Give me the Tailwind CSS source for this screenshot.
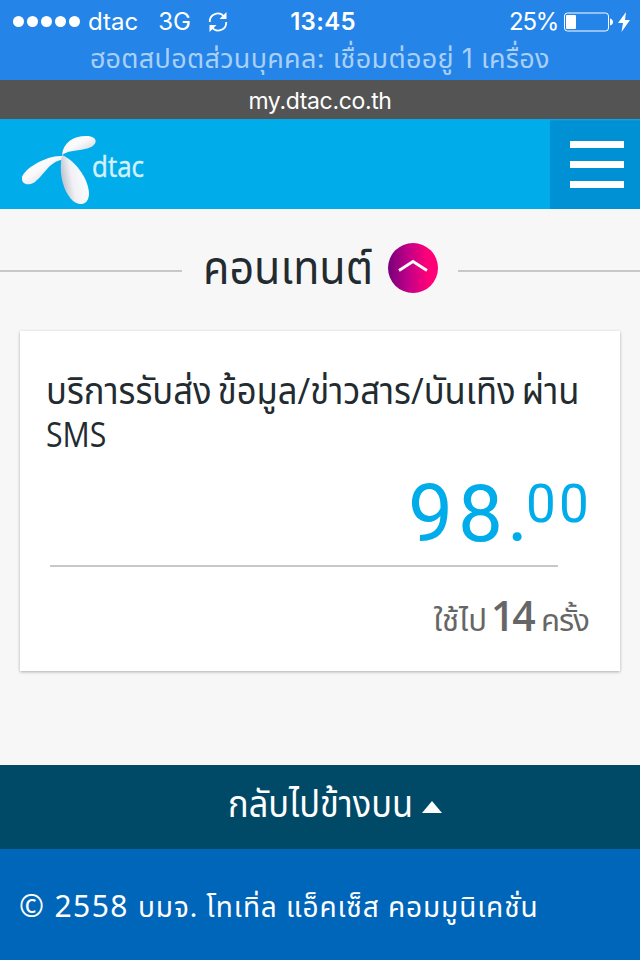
<!DOCTYPE html>
<html lang="th">
<head>
<meta charset="utf-8">
<meta name="viewport" content="width=device-width">
<title>dtac</title>
<script src="https://cdn.jsdelivr.net/npm/@tailwindcss/browser@4"></script>
</head>
<body class="w-[640px] h-[960px] overflow-hidden bg-[#f7f7f7] flex flex-col font-['Inter','Noto_Sans_Thai','Noto_Sans',sans-serif]">
<header class="h-20 shrink-0 bg-[#2484e8] text-white">
  <div class="h-10 grid grid-cols-[1fr_auto_1fr] items-center pl-[13px] pr-[10px] text-[24px] leading-[42px] whitespace-nowrap">
    <div class="flex items-center">
      <div class="flex gap-[3px]"><i class="size-[11px] rounded-full bg-white"></i><i class="size-[11px] rounded-full bg-white"></i><i class="size-[11px] rounded-full bg-white"></i><i class="size-[11px] rounded-full bg-white"></i><i class="size-[11px] rounded-full bg-white"></i></div>
      <span class="ml-2 pt-px">dtac</span><span class="ml-[20px] pt-px">3G</span>
      <svg class="ml-[17px] w-[20px] h-[20px]" viewBox="0 0 20 20" fill="none" stroke="white" stroke-width="1.8"><path d="M1.800 10A8 8 0 0 1 16 4.500M18.200 10A8 8 0 0 1 4 15.500"/><path d="M18.500 0V7H11.500Z M1.500 20V13H8.500Z" fill="white" stroke="none"/></svg>
    </div>
    <span class="font-semibold pl-[3px] pt-px tracking-[.3px]">13:45</span>
    <div class="flex items-center justify-end">
      <span class="tracking-[-1.300px] pt-px">25%</span>
      <svg class="ml-[6px] w-[49px] h-[20px]" viewBox="0 0 49 20"><rect x=".5" y="1" width="44" height="18" rx="3" fill="none" stroke="white"/><rect x="2" y="3" width="10" height="14" rx="1" fill="white"/><path d="M46 6.500Q49 7.500 49 10T46 13.500Z" fill="white"/></svg>
      <svg class="ml-[5px] w-[12px] h-[20px]" viewBox="0 0 12 20"><path d="M8 0L0 11H5L3.500 20L12 8H7Z" fill="white"/></svg>
    </div>
  </div>
  <div class="h-10 flex justify-center text-[27px] tracking-[.3px] leading-[38px] text-[#a9d0f7] whitespace-nowrap"><span>ฮอตสปอตส่วนบุคคล: เชื่อมต่ออยู่ 1 เครื่อง</span></div>
</header>
<div class="h-[39px] shrink-0 bg-[#545454] text-white text-center text-[23px] tracking-[-.35px] leading-[42px]"><span>my.dtac.co.th</span></div>
<nav class="h-[90px] shrink-0 bg-[#00acea] flex justify-between">
  <div class="flex items-center pl-5">
    <svg class="w-[140px] h-[80px]" viewBox="20 124 140 80">
      <defs>
        <linearGradient id="a" x1="0" y1="0" x2="1" y2="1"><stop offset=".45" stop-color="#fafafc"/><stop offset="1" stop-color="#c6cbd4"/></linearGradient>
        <linearGradient id="b" x1="0" y1=".6" x2="1" y2=".3"><stop offset="0" stop-color="#b4bac5"/><stop offset=".4" stop-color="#f0f1f5"/><stop offset="1" stop-color="#fff"/></linearGradient>
      </defs>
      <path d="M62 155C63 143 73 136 86 136C100 136 98 147 85 149C75 151 67 151 62 155Z" fill="url(#a)"/>
      <path d="M62 156C47 155 25 168 22 177C21 185 29 186 35 182C44 175 50 161 62 160Z" fill="url(#a)"/>
      <path d="M62 155C74 160 88 177 89 193C89 204 81 207 73 201C64 193 58 175 62 155Z" fill="url(#b)"/>
      <text x="92" y="177" font-family="Open Sans" font-size="30" fill="#d5f0fd" stroke="#d5f0fd" stroke-width=".5" textLength="52" lengthAdjust="spacingAndGlyphs">dtac</text>
    </svg>
  </div>
  <button class="w-[90px] bg-[#0091d4] flex flex-col items-start pl-5 pt-[20px] gap-[13px] mt-px border-t border-[#0898d8]" aria-label="เมนู"><i class="block w-[54px] h-[7px] bg-white"></i><i class="block w-[54px] h-[7px] bg-white"></i><i class="block w-[54px] h-[7px] bg-white"></i></button>
</nav>
<main class="h-[556px] shrink-0 pt-[34px]">
  <div class="flex items-center h-[54px] text-[#222b30]">
    <i class="w-[182px] h-[2px] bg-[#c8c8c8] mt-[2px]"></i>
    <h1 class="ml-[21px] w-[170px] text-[47px] leading-[48px] mb-[7px] whitespace-nowrap"><span class="inline-block origin-left scale-x-[.915]">คอนเทนต์</span></h1>
    <svg class="ml-[15px] mb-[4px] size-[50px]" viewBox="0 0 50 50"><defs><linearGradient id="p"><stop offset="0" stop-color="#76007a"/><stop offset=".4" stop-color="#c00088"/><stop offset=".8" stop-color="#ff0078"/></linearGradient></defs><circle cx="25" cy="25" r="25" fill="url(#p)"/><path d="M11 27.500L25 18.500L39 27.500" fill="none" stroke="white" stroke-width="2.800"/></svg>
    <i class="ml-5 flex-1 h-[2px] bg-[#c8c8c8] mt-[2px]"></i>
  </div>
  <section class="mx-5 mt-[34px] h-[340px] bg-white shadow-[0_1px_3px_rgba(0,0,0,.3)] pt-[36px] font-['Open_Sans','Noto_Sans_Thai',sans-serif]">
    <p class="pl-[26px] h-[90px] text-[37px] leading-[45px] text-[#222b30] whitespace-nowrap"><span class="block w-max origin-left scale-x-[.935] [word-spacing:-3px]">บริการรับส่ง ข้อมูล/ข่าวสาร/บันเทิง ผ่าน</span><span class="block w-max origin-left scale-x-[.89] text-[34px]">SMS</span></p>
    <div class="h-[108px] flex justify-end pr-[28px] text-[#00acea] text-[80px] leading-[114px] font-['Roboto',sans-serif]"><span class="tracking-[5px]">98</span><span class="w-[19px] -ml-px">.</span><span class="text-[53px] leading-[95px] tracking-[3.200px]">00</span></div>
    <div class="ml-[30px] w-[508px] h-[2px] bg-[#c8c8c8]"></div>
    <div class="h-[96px] flex justify-end items-baseline gap-[7px] pr-[31px] pt-[21px] text-[#666] text-[31px] leading-[54px] whitespace-nowrap"><span class="-mr-[3px]">ใช้ไป</span><span class="text-[41px] font-semibold tracking-[-2px] w-[43px]">14</span><span class="tracking-[-.9px]">ครั้ง</span></div>
  </section>
</main>
<div class="h-[84px] shrink-0 bg-[#004a68] text-white flex items-center pl-[228px] text-[37px]"><span class="whitespace-nowrap w-[184px] mb-[6px]"><span class="inline-block origin-left scale-x-[.93]">กลับไปข้างบน</span></span><svg class="ml-[10px] w-5 h-3" viewBox="0 0 20 12"><path d="M10 0L20 12H0Z" fill="white"/></svg></div>
<footer class="h-[111px] shrink-0 bg-[#0066b9] text-white pl-[19px] text-[28px] leading-[114px] whitespace-nowrap font-['Noto_Sans','Noto_Sans_Thai',sans-serif]"><span class="text-[30px] tracking-[1.400px]">© 2558 </span><span class="tracking-[.9px]">บมจ. โทเทิ่ล แอ็คเซ็ส คอมมูนิเคชั่น</span></footer>
</body>
</html>
